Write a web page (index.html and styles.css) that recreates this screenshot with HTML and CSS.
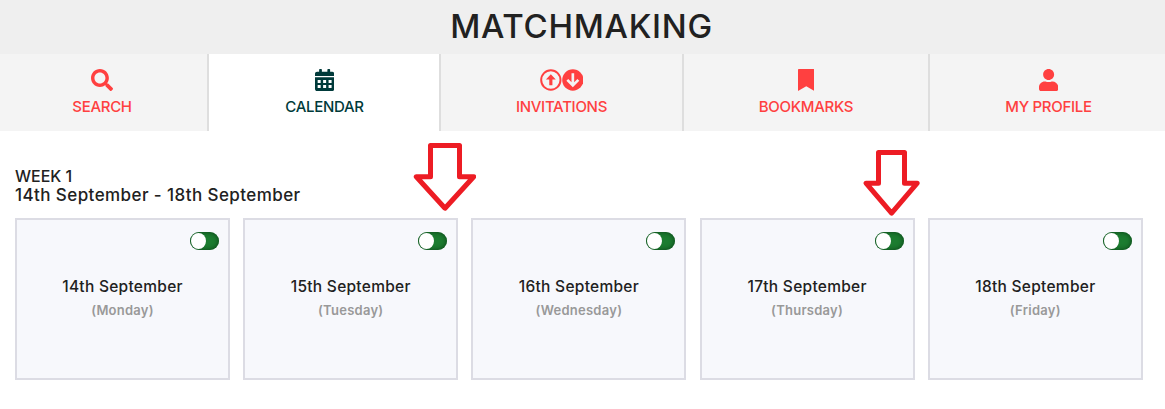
FILE: index.html
```html
<!DOCTYPE html>
<html lang="en">
<head>
  <meta charset="UTF-8" />
  <meta name="viewport" content="width=device-width, initial-scale=1.0" />
  <title>Matchmaking</title>
  <link rel="stylesheet" href="styles.css">
</head>
<body>

  <header class="page-header">
    <h1>MATCHMAKING</h1>
  </header>

  <nav class="tabs">
    <a class="tab tab-search">
      <span class="icons"><svg viewBox="0 0 512 512"><path d="M505 442.7L405.3 343c-4.5-4.5-10.6-7-17-7H372c27.6-35.3 44-79.7 44-128C416 93.1 322.9 0 208 0S0 93.1 0 208s93.1 208 208 208c48.3 0 92.7-16.4 128-44v16.3c0 6.4 2.5 12.5 7 17l99.7 99.7c9.4 9.4 24.6 9.4 33.9 0l28.3-28.3c9.4-9.4 9.4-24.6.1-34zM208 336c-70.7 0-128-57.2-128-128 0-70.7 57.2-128 128-128 70.7 0 128 57.2 128 128 0 70.7-57.2 128-128 128z"/></svg></span>
      <span class="label">SEARCH</span>
    </a>
    <a class="tab tab-calendar active">
      <span class="icons"><svg viewBox="0 0 448 512"><path fill-rule="evenodd" d="M400 64h-48V16c0-9-7-16-16-16h-32c-9 0-16 7-16 16v48H160V16c0-9-7-16-16-16h-32c-9 0-16 7-16 16v48H48C21 64 0 85 0 112v48h448v-48c0-27-21-48-48-48zM0 192v272c0 27 21 48 48 48h352c27 0 48-21 48-48V192zM62 256h70v68H62zM189 256h70v68h-70zM316 256h70v68h-70zM62 372h70v68H62zM189 372h70v68h-70zM316 372h70v68h-70z"/></svg></span>
      <span class="label">CALENDAR</span>
    </a>
    <a class="tab tab-invitations">
      <span class="icons">
        <svg viewBox="0 0 22 22"><circle cx="11" cy="11" r="9.8" fill="none" stroke="currentColor" stroke-width="2"/><path d="M11 5.2l5 5.2h-3.4v5.8H9.4v-5.8H6z"/></svg>
        <svg viewBox="0 0 22 22"><circle cx="11" cy="11" r="10.8"/><path d="M11 4.2v12M5.4 10.9l5.6 5.6 5.6-5.6" fill="none" stroke="#f4f4f4" stroke-width="2.7"/></svg>
      </span>
      <span class="label">INVITATIONS</span>
    </a>
    <a class="tab tab-bookmarks">
      <span class="icons"><svg viewBox="0 0 384 512"><path d="M0 512V24C0 10 10 0 24 0h336c14 0 24 10 24 24v488L192 400 0 512z"/></svg></span>
      <span class="label">BOOKMARKS</span>
    </a>
    <a class="tab tab-profile">
      <span class="icons"><svg viewBox="0 0 448 512"><path d="M224 256c70.7 0 128-57.3 128-128S294.7 0 224 0 96 57.3 96 128s57.3 128 128 128zm89.6 32h-16.7c-22.2 10.2-46.9 16-72.9 16s-50.6-5.8-72.9-16h-16.7C60.2 288 0 348.2 0 422.4V464c0 26.5 21.5 48 48 48h352c26.5 0 48-21.5 48-48v-41.6c0-74.2-60.2-134.4-134.4-134.4z"/></svg></span>
      <span class="label">MY PROFILE</span>
    </a>
  </nav>

  <main>
    <h2>WEEK 1<br><span class="range">14th September - 18th September</span></h2>

    <div class="days">
      <div class="day">
        <span class="toggle"></span>
        <div class="date">14th September</div>
        <div class="weekday">(Monday)</div>
      </div>
      <div class="day">
        <span class="toggle"></span>
        <div class="date">15th September</div>
        <div class="weekday">(Tuesday)</div>
      </div>
      <div class="day">
        <span class="toggle"></span>
        <div class="date">16th September</div>
        <div class="weekday">(Wednesday)</div>
      </div>
      <div class="day">
        <span class="toggle"></span>
        <div class="date">17th September</div>
        <div class="weekday">(Thursday)</div>
      </div>
      <div class="day">
        <span class="toggle"></span>
        <div class="date">18th September</div>
        <div class="weekday">(Friday)</div>
      </div>
    </div>
  </main>

  <!-- arrows pointing at the toggles -->
  <svg class="arrow arrow-tuesday" viewBox="0 0 64 70"><path d="M18.5 3.500h29v31.200h14.200L33 66.200 4.300 34.700h14.200z"/></svg>
  <svg class="arrow arrow-thursday" viewBox="0 0 60 70"><path d="M16.500 3.500h26v30.700h12.700L29.600 64.200 4 34.200h12.500z"/></svg>

</body>
</html>
```

FILE: styles.css
```css
* {
  box-sizing: border-box;
}
body {
  margin: 0;
  background: #fff;
  color: #212121;
  font-family: Inter, "Liberation Sans", sans-serif;
  font-weight: 500;
}
.page-header {
  height: 54px;
  background: #efefef;
  text-align: center;
}
h1 {
  margin: 0;
  padding-right: 2px;
  font-size: 33px;
  font-weight: 500;
  line-height: 53px;
  letter-spacing: 0.7px;
}
.tabs {
  display: grid;
  grid-template-columns: 209px 232px 243px 246px 1fr;
  height: 77px;
}
.tab {
  display: flex;
  flex-direction: column;
  align-items: center;
  padding-top: 15px;
  background: #f4f4f4;
  border-right: 2px solid #dedede;
  color: #ff4040;
  font-size: 15px;
  line-height: 20px;
  letter-spacing: -0.3px;
}
.tab:last-child {
  padding-left: 2px;
  border-right: none;
}
.tab-search {
  padding-right: 3px;
}
.tab-calendar {
  padding-left: 1px;
}
.tab.active {
  background: #fff;
  color: #003a3a;
}
.icons {
  display: flex;
  height: 22px;
  margin-bottom: 6px;
}
.icons svg {
  height: 22px;
  fill: currentColor;
}
.tab-invitations svg {
  width: 21.7px;
}
main {
  padding: 36px 22.2px 0 15px;
}
h2 {
  margin: 0 0 13px;
  font-size: 16px;
  font-weight: 500;
  line-height: 19px;
}
.range {
  font-size: 17px;
  letter-spacing: 0.42px;
}
.days {
  display: grid;
  grid-template-columns: repeat(5, 215px);
  justify-content: space-between;
}
.day {
  display: flex;
  flex-direction: column;
  align-items: center;
  height: 162px;
  padding: 12px 9px 0;
  background: #f7f8fc;
  border: 2px solid #dcdce4;
}
.toggle {
  align-self: flex-end;
  width: 29px;
  height: 18px;
  padding: 1px;
  border-radius: 9px;
  background: #1c7c30;
  box-shadow: inset 0 0 5px #0b3f16;
}
.toggle::before {
  content: "";
  display: block;
  width: 15px;
  height: 16px;
  border-radius: 50%;
  background: #fff;
}
.date {
  margin-top: 27px;
  font-size: 15.5px;
  line-height: 20px;
  letter-spacing: 0.28px;
}
.weekday {
  margin-top: 4px;
  color: #999;
  font-size: 13px;
  font-weight: 600;
  line-height: 18px;
  letter-spacing: 0.25px;
}
.arrow {
  position: absolute;
  fill: #fff;
  stroke: #ed1c24;
  stroke-width: 5;
  stroke-linejoin: round;
}
.arrow-tuesday {
  left: 412px;
  top: 142px;
  width: 64px;
  height: 70px;
}
.arrow-thursday {
  left: 862px;
  top: 149px;
  width: 60px;
  height: 70px;
}
```
